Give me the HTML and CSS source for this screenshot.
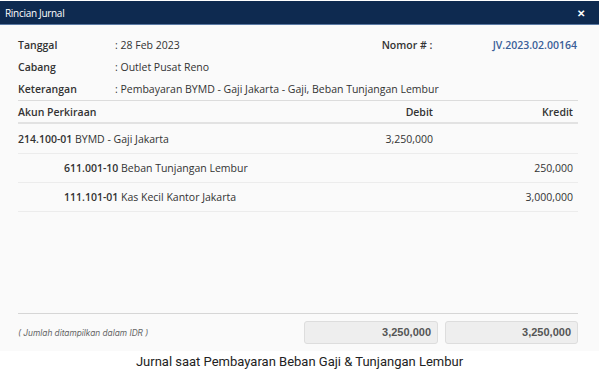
FILE: index.html
```html
<!DOCTYPE html>
<html lang="en">
<head>
    <meta charset="UTF-8">
    <title>Rincian Jurnal</title>
    <link rel="stylesheet" href="styles.css">
</head>
<body>

    <div class="modal">
        <div class="modal-header">
            <span class="modal-title">Rincian Jurnal</span>
            <span class="modal-close">&#x2715;</span>
        </div>
        <div class="modal-body">
            <div class="info">
                <div class="info-row">
                    <span class="info-label">Tanggal</span>
                    <span class="info-value">: 28 Feb 2023</span>
                    <span class="info-label nomor">Nomor # :</span>
                    <span class="jv-number">JV.2023.02.00164</span>
                </div>
                <div class="info-row">
                    <span class="info-label">Cabang</span>
                    <span class="info-value">: Outlet Pusat Reno</span>
                </div>
                <div class="info-row">
                    <span class="info-label">Keterangan</span>
                    <span class="info-value">: Pembayaran BYMD - Gaji Jakarta - Gaji, Beban Tunjangan Lembur</span>
                </div>
            </div>

            <div class="journal">
                <div class="journal-head">
                    <div>Akun Perkiraan</div>
                    <div class="num">Debit</div>
                    <div class="num">Kredit</div>
                </div>
                <div class="journal-row first">
                    <div><b>214.100-01</b> BYMD - Gaji Jakarta</div>
                    <div class="num">3,250,000</div>
                    <div class="num"></div>
                </div>
                <div class="journal-row">
                    <div class="indent"><b>611.001-10</b> Beban Tunjangan Lembur</div>
                    <div class="num"></div>
                    <div class="num">250,000</div>
                </div>
                <div class="journal-row">
                    <div class="indent"><b>111.101-01</b> Kas Kecil Kantor Jakarta</div>
                    <div class="num"></div>
                    <div class="num">3,000,000</div>
                </div>
            </div>

            <div class="totals">
                <span class="currency-note">( Jumlah ditampilkan dalam IDR )</span>
                <div class="total-box">3,250,000</div>
                <div class="total-box">3,250,000</div>
            </div>
        </div>
    </div>

    <p class="caption">Jurnal saat Pembayaran Beban Gaji &amp; Tunjangan Lembur</p>

</body>
</html>
```

FILE: styles.css
```css
body {
    margin: 0;
    padding-top: 1px;
    background: #fff;
    font-family: "Open Sans", "Noto Sans", sans-serif;
    color: #333;
}
.modal {
    width: 599px;
    height: 350px;
    display: flex;
    flex-direction: column;
    background: #fafafa;
}
.modal-header {
    height: 23px;
    background: #0e2a50;
    border-bottom: 1px solid #5a79a3;
    display: flex;
    align-items: center;
    justify-content: space-between;
    padding: 0 14px 0 5px;
    color: #fff;
}
.modal-title {
    font-size: 10px;
    letter-spacing: -0.3px;
}
.modal-close {
    font-size: 10px;
    font-weight: bold;
}
.modal-body {
    flex: 1;
    display: flex;
    flex-direction: column;
    padding: 9px 21px 0 18px;
}
.info {
    border-bottom: 1px solid #dcdcdc;
}
.info-row {
    height: 22px;
    display: flex;
    align-items: center;
    font-size: 10.5px;
}
.info-label {
    width: 97px;
    font-weight: 600;
}
.info-value {
    flex: 1;
}
.info-label.nomor {
    width: 111px;
}
.jv-number {
    color: #3b5f98;
    font-weight: 600;
    padding-right: 1px;
}
.journal {
    flex: 1;
    border-bottom: 1px solid #d6d6d6;
    font-size: 10.5px;
}
.journal-head,
.journal-row {
    display: grid;
    grid-template-columns: 1fr 140px 140px;
    align-items: center;
}
.journal-head {
    height: 21px;
    font-weight: 600;
    border-bottom: 2px solid #e2e2e2;
}
.journal-row {
    height: 28px;
    border-bottom: 1px solid #ececec;
}
.journal-row.first {
    height: 29px;
}
.journal-row b {
    font-weight: 600;
}
.num {
    text-align: right;
    padding-right: 5px;
}
.indent {
    padding-left: 46px;
}
.totals {
    height: 37px;
    display: flex;
    align-items: center;
    gap: 7px;
}
.currency-note {
    flex: 1;
    font-family: Inter, "Noto Sans", sans-serif;
    font-size: 8.3px;
    font-style: italic;
    color: #666;
}
.total-box {
    width: 126px;
    height: 21px;
    line-height: 21px;
    padding-right: 6px;
    text-align: right;
    background: #eeeeee;
    border: 1px solid #dddddd;
    border-radius: 3px;
    font-family: "Liberation Sans", Arial, sans-serif;
    font-weight: bold;
    font-size: 11px;
    color: #555;
}
.total-box:last-child {
    width: 125px;
}
.caption {
    width: 599px;
    margin: 3px 0 0;
    text-align: center;
    font-family: Roboto, sans-serif;
    font-size: 13px;
    color: #222;
}
```
